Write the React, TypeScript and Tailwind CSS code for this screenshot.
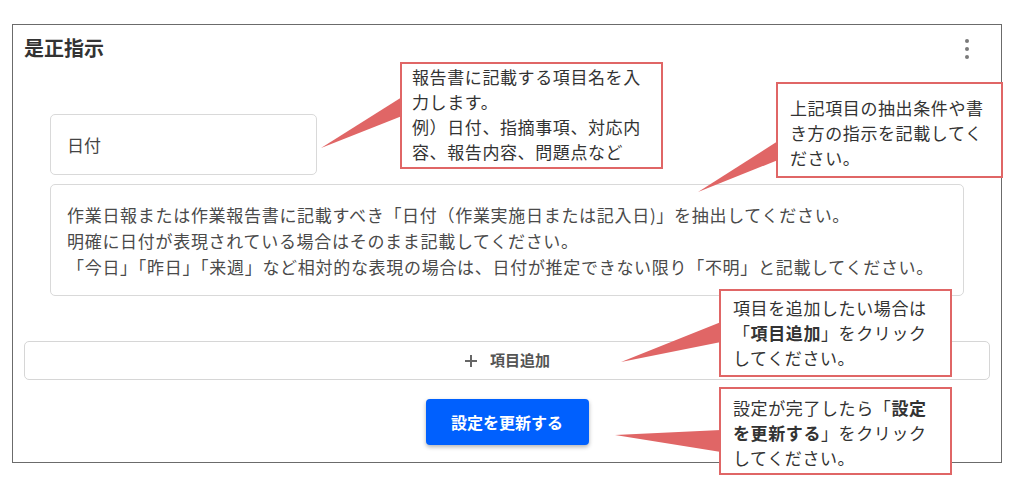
import type { ReactNode } from 'react';

const font = "font-['Noto_Sans_CJK_JP','Noto_Sans',sans-serif]";

function Callout({ className, children }: { className: string; children: ReactNode }) {
  return (
    <div
      className={`absolute border-2 border-[#e06666] bg-white pl-[10px] text-[17px] leading-[25px] tracking-[0.6px] whitespace-nowrap text-[#333] ${className}`}
    >
      {children}
    </div>
  );
}

function Pointers() {
  return (
    <svg className="pointer-events-none absolute left-0 top-0" width="1022" height="487" viewBox="0 0 1022 487">
      <polygon points="321,148 402,97 402,116" fill="#e06666" />
      <polygon points="698,192 778,141 778,160" fill="#e06666" />
      <polygon points="621,362 721,322 721,342" fill="#e06666" />
      <polygon points="615,435 721,430 721,452" fill="#e06666" />
    </svg>
  );
}

export default function App() {
  return (
    <div className={`relative h-[487px] w-[1022px] overflow-hidden bg-white pl-[12px] pt-[24px] ${font}`}>
      <div className="flex h-[439px] w-[990px] flex-col border border-[#6b6b6b] px-[11px]">
        <div className="flex items-start justify-between pt-[11px]">
          <h2 className="text-[20px] font-bold leading-[24px] text-[#333]">是正指示</h2>
          <div className="mr-[21px] mt-[3px] flex flex-col gap-[4px]">
            <span className="h-[4px] w-[4px] rounded-full bg-[#7a7a7a]" />
            <span className="h-[4px] w-[4px] rounded-full bg-[#7a7a7a]" />
            <span className="h-[4px] w-[4px] rounded-full bg-[#7a7a7a]" />
          </div>
        </div>

        <div className="mt-[54px] flex flex-col gap-[9px] px-[26px]">
          <div className="flex h-[61px] w-[267px] items-center rounded-[5px] border border-[#d9d9d9] pl-[16px] text-[17px] text-[#444]">
            日付
          </div>
          <div className="h-[112px] rounded-[5px] border border-[#d9d9d9] pl-[16px] pt-[17px] text-[17px] leading-[26px] tracking-[0.7px] text-[#4a4a4a]">
            <p>作業日報または作業報告書に記載すべき「日付（作業実施日または記入日)」を抽出してください。</p>
            <p>明確に日付が表現されている場合はそのまま記載してください。</p>
            <p>「今日」「昨日」「来週」など相対的な表現の場合は、日付が推定できない限り「不明」と記載してください。</p>
          </div>
        </div>

        <button
          type="button"
          className="mt-[45px] flex h-[39px] w-full items-center justify-center gap-[12px] rounded-[5px] border border-[#d6d6d6] bg-white text-[15px] font-semibold text-[#555]"
        >
          <svg width="14" height="14" viewBox="0 0 14 14">
            <path d="M7 1v12M1 7h12" stroke="#666" strokeWidth="2" />
          </svg>
          項目追加
        </button>

        <div className="mt-[19px] flex justify-center">
          <button
            type="button"
            className="h-[46px] w-[163px] rounded-[4px] bg-[#0060fe] text-[16px] font-bold text-white shadow-[0_2px_4px_rgba(0,0,0,0.3)]"
          >
            設定を更新する
          </button>
        </div>
      </div>

      <Pointers />

      <Callout className="left-[400px] top-[62px] h-[107px] w-[263px] pt-[0px]">
        報告書に記載する項目名を入
        <br />
        力します。
        <br />
        例）日付、指摘事項、対応内
        <br />
        容、報告内容、問題点など
      </Callout>

      <Callout className="left-[776px] top-[82px] h-[96px] w-[227px] pl-[12px] pt-[11px]">
        上記項目の抽出条件や書
        <br />
        き方の指示を記載してく
        <br />
        ださい。
      </Callout>

      <Callout className="left-[719px] top-[289px] h-[88px] w-[233px] pl-[12px] pt-[4px]">
        項目を追加したい場合は
        <br />
        「<b>項目追加</b>」をクリック
        <br />
        してください。
      </Callout>

      <Callout className="left-[719px] top-[387px] h-[88px] w-[233px] pl-[12px] pt-[6px]">
        設定が完了したら「<b>設定</b>
        <br />
        <b>を更新する</b>」をクリック
        <br />
        してください。
      </Callout>
    </div>
  );
}
